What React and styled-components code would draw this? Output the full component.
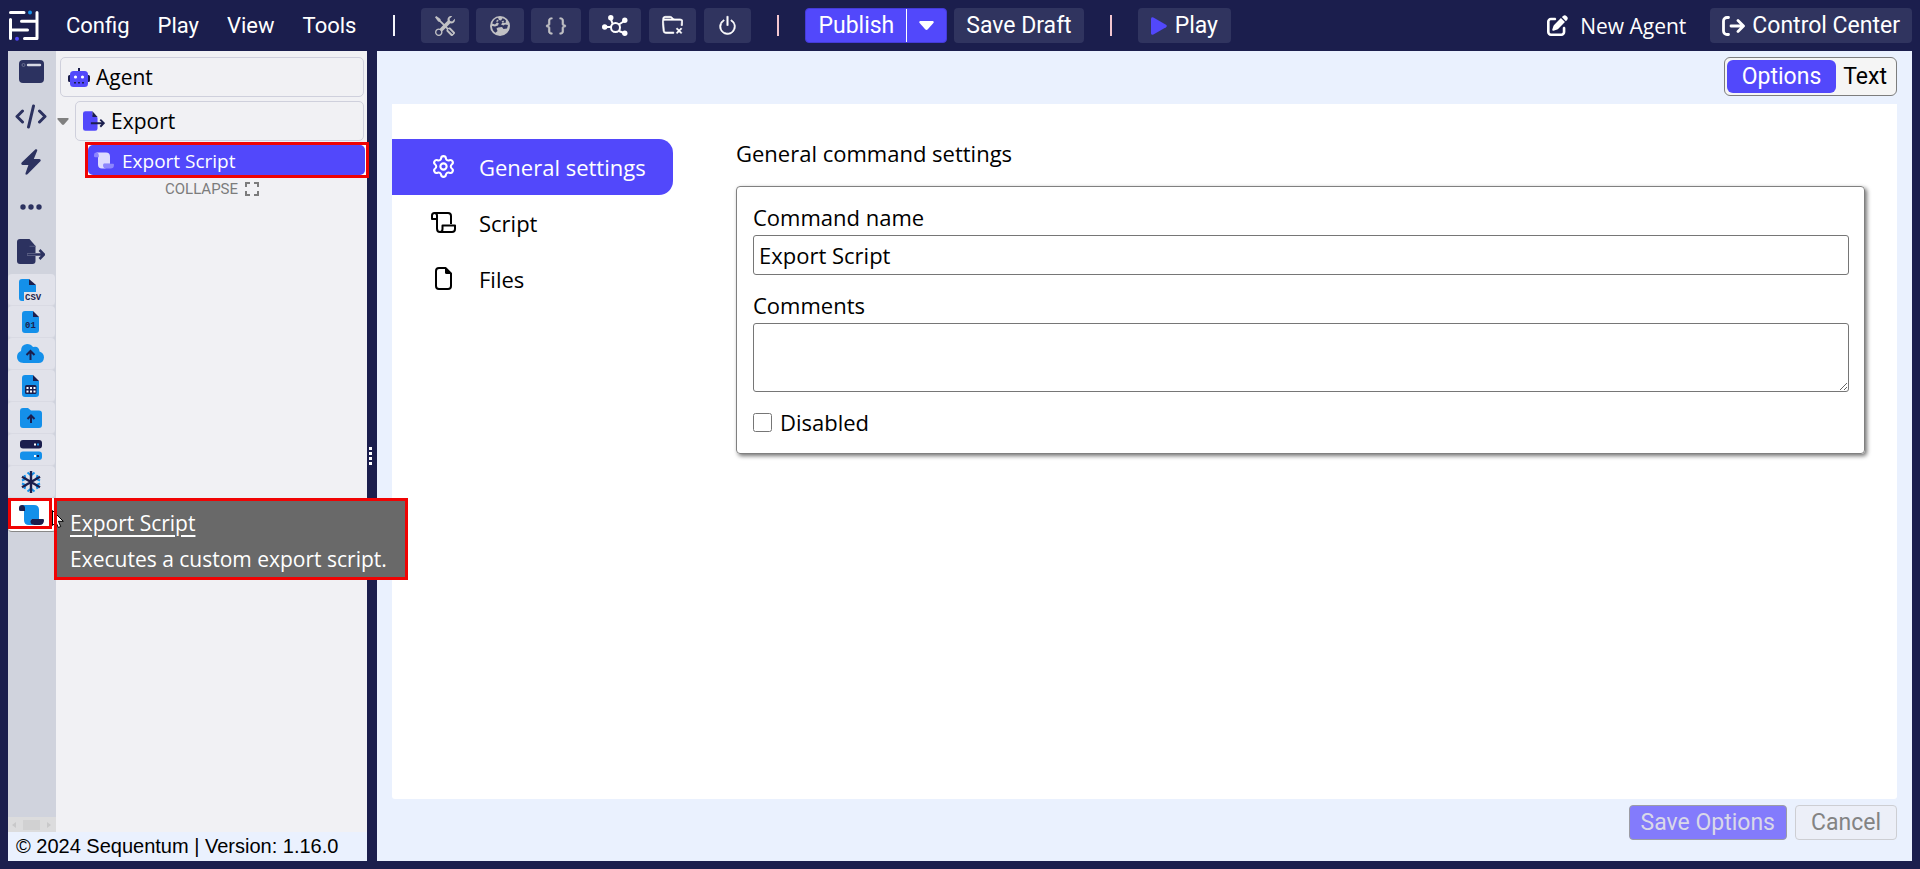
import React from 'react';
import styled, { createGlobalStyle, css } from 'styled-components';
import { BsTools, BsBraces, BsFolderX, BsPower } from 'react-icons/bs';
import { FaPenToSquare } from 'react-icons/fa6';
import { Settings } from 'lucide-react';

const color = {
  navy: '#1b1e4d',
  navyLight: '#30345f',
  accent: '#5248fb',
  pale: '#eaf1fe',
  rail: '#d0d3dd',
  railItem: '#e1e2ea',
  tree: '#f1f1f4',
  ink: '#2c3260',
  blue: '#1490ea',
  red: '#f00303',
};

const openSans = '"Open Sans", "Noto Sans", sans-serif';
const roboto = 'Roboto, sans-serif';

const GlobalStyle = createGlobalStyle`
  *, *::before, *::after { box-sizing: border-box; }
  body { margin: 0; background: ${color.navy}; }
  button, input, textarea { font: inherit; margin: 0; }
  svg { display: block; flex: none; }
`;

const Page = styled.div`
  min-height: 100vh;
  display: flex;
  flex-direction: column;
  padding: 0 8px 8px;
  background: ${color.navy};
  color: #000;
  font-family: ${openSans};
  font-size: 22px;
`;

/* Header */
const Header = styled.header`
  display: flex;
  align-items: center;
  height: 51px;
  color: #fff;
  font-family: ${roboto};
  font-size: 23px;
  white-space: nowrap;
`;

const Menu = styled.nav`
  display: flex;
  gap: 28px;
  margin: 0 11px 0 26px;
  font-size: 22px;
`;

const MenuButton = styled.button`
  padding: 0;
  border: 0;
  background: none;
  color: inherit;
`;

const Divider = styled.span`
  width: 2px;
  height: 21px;
  background: ${(p) => (p.$red ? '#f3c6cf' : '#f4f4fa')};
  margin: 0 26px;
`;

const Tools = styled.div`
  display: flex;
  gap: ${(p) => p.$gap}px;
  & + & { margin-left: 8px; }
`;

const BarButton = styled.button`
  display: flex;
  align-items: center;
  gap: 7px;
  height: 35px;
  padding: 0 12px;
  border: 0;
  border-radius: 4px;
  background: ${color.navyLight};
  color: #fff;
`;

const PlayButton = styled(BarButton)`
  gap: 8px;
  padding: 0 13px;
`;

const IconButton = styled(BarButton)`
  padding: 0 ${(p) => p.$pad || 14}px;
  color: ${(p) => (p.$dim ? '#c1c1c4' : '#fff')};
`;

const Bold = styled.span`
  display: flex;
  path { stroke: currentColor; stroke-width: 0.5px; }
`;

const Publish = styled.div`
  display: flex;
  height: 35px;
  margin-right: 7px;
  border: 1px solid #443bd8;
  border-radius: 4px;
  background: ${color.accent};
`;

const PublishPart = styled.button`
  display: flex;
  align-items: center;
  padding: 0 12px;
  border: 0;
  background: none;
  color: #fff;
  & + & { border-left: 1px solid #fff; }
`;

const HeaderEnd = styled.div`
  display: flex;
  align-items: center;
  margin-left: auto;
  gap: 24px;
`;

const NewAgent = styled.a`
  display: flex;
  align-items: center;
  gap: 12px;
  color: #fff;
  text-decoration: none;
  font-family: ${openSans};
  font-size: 21px;
`;

/* Body */
const Body = styled.div`
  flex: 1;
  display: flex;
`;

const LeftPane = styled.aside`
  width: 359px;
  flex: none;
  display: flex;
  flex-direction: column;
  background: ${color.tree};
`;

const LeftContent = styled.div`
  flex: 1;
  display: flex;
`;

const Rail = styled.div`
  width: 48px;
  flex: none;
  display: flex;
  flex-direction: column;
  background: ${color.rail};
`;

const RailGroups = styled.div`
  display: grid;
  grid-auto-rows: 45px;
  margin-top: -2px;
`;

const RailButton = styled.button`
  display: grid;
  place-items: center;
  padding: 0 2px 0 0;
  border: 0;
  background: none;
`;

const RailItems = styled.div`
  position: relative;
  display: flex;
  flex-direction: column;
`;

const RailItem = styled(RailButton)`
  height: 32px;
  border-radius: 4px;
  margin-right: 1px;
  border-bottom: 1px solid #d9dae3;
  background: ${color.railItem};
  ${(p) =>
    p.$active &&
    css`
      height: 34px;
      margin-right: 0;
      border-bottom: 1px solid #888;
      background: #fff;
    `}
`;

const RailFrame = styled.div`
  position: absolute;
  left: 0;
  right: 4px;
  bottom: 3px;
  height: 31px;
  border: 3px solid ${color.red};
  pointer-events: none;
`;

const Tooltip = styled.div`
  position: absolute;
  z-index: 3;
  left: 46px;
  top: 224px;
  width: max-content;
  padding: 4px 18px 0 13px;
  border: 3px solid ${color.red};
  background: #696969;
  color: #fff;
  font-size: 21px;
  line-height: 36px;
  p { margin: 0; }
  p:first-child { text-decoration: underline; text-underline-offset: 4px; }
`;

const Cursor = styled.svg`
  position: absolute;
  z-index: 4;
  left: 44px;
  bottom: 3px;
`;

const RailScroll = styled.div`
  display: flex;
  align-items: center;
  justify-content: space-between;
  height: 15px;
  margin-top: auto;
  padding: 0 5px 0 4px;
  background: #dcdcdd;
`;

const ScrollThumb = styled.span`
  width: 17px;
  height: 10px;
  background: #d1d1d2;
`;

const Tree = styled.div`
  flex: 1;
  display: flex;
  flex-direction: column;
  gap: 4px;
  padding: 6px 3px 6px 4px;
`;

const TreeRow = styled.div`
  display: flex;
  align-items: center;
  gap: 6px;
`;

const TreeCaret = styled.button`
  display: flex;
  margin: 0 0 0 -3px;
  padding: 0;
  border: 0;
  background: none;
`;

const TreeNode = styled.button`
  flex: 1;
  display: flex;
  align-items: center;
  gap: 6px;
  height: 40px;
  padding: 0 7px;
  border: 1px solid #cfd0dc;
  border-radius: 5px;
  background: ${color.tree};
  font-size: 21px;
  text-align: left;
`;

const SelectedFrame = styled.div`
  position: relative;
  z-index: 1;
  margin: -3px -5px 0 25px;
  padding-right: 1px;
  border: 3px solid ${color.red};
  background: #fff;
`;

const SelectedNode = styled(TreeNode)`
  width: 100%;
  height: 30px;
  gap: 8px;
  padding: 1px 6px 0;
  border: 0;
  background: ${color.accent};
  color: #fff;
  font-size: 19px;
`;

const Collapse = styled.button`
  display: flex;
  align-items: center;
  justify-content: center;
  gap: 7px;
  margin-top: -1px;
  padding: 0;
  border: 0;
  background: none;
  color: #7c7c7c;
  font-family: ${roboto};
  font-size: 15px;
  line-height: 16px;
`;

const Version = styled.footer`
  height: 29px;
  padding-left: 8px;
  background: ${color.pale};
  font-family: "Liberation Sans", Arial, sans-serif;
  font-size: 20px;
  line-height: 28px;
`;

const Splitter = styled.div`
  width: 10px;
  flex: none;
  display: flex;
  flex-direction: column;
  align-items: center;
  justify-content: center;
  gap: 2px;
  padding-right: 4px;
  span { width: 3px; height: 3px; background: #fff; }
`;

const Main = styled.main`
  flex: 1;
  min-width: 0;
  display: flex;
  flex-direction: column;
  padding: 6px 15px 21px;
  background: ${color.pale};
`;

const Toggle = styled.div`
  align-self: flex-end;
  display: flex;
  height: 39px;
  margin-bottom: 8px;
  padding: 2px;
  border: 1px solid #7d7d7d;
  border-radius: 6px;
  background: #f5f5f5;
  font-size: 23px;
`;

const ToggleButton = styled.button`
  padding: 0 ${(p) => (p.$on ? 15 : 7)}px;
  border: 0;
  border-radius: 6px;
  background: ${(p) => (p.$on ? color.accent : 'transparent')};
  color: ${(p) => (p.$on ? '#fff' : '#000')};
  font-family: ${roboto};
`;

const Sheet = styled.section`
  flex: 1;
  display: flex;
  padding: 35px 32px 35px 0;
  border-radius: 0 0 3px 3px;
  background: #fff;
`;

const Tabs = styled.nav`
  width: 281px;
  flex: none;
  margin-right: 63px;
`;

const Tab = styled.button`
  display: flex;
  align-items: center;
  width: 100%;
  height: 56px;
  padding: 0 0 1px 37px;
  border: 0;
  border-radius: 0 14px 14px 0;
  background: ${(p) => (p.$on ? color.accent : 'none')};
  color: ${(p) => (p.$on ? '#fff' : '#000')};
`;

const TabIcon = styled.span`
  display: flex;
  justify-content: center;
  width: 28px;
  margin-right: 22px;
`;

const Form = styled.form`
  flex: 1;
  min-width: 0;
`;

const Title = styled.h1`
  margin: 0 0 19px;
  font-size: 22px;
  font-weight: 400;
  line-height: 28px;
`;

const Card = styled.div`
  display: flex;
  flex-direction: column;
  padding: 16px 15px 16px 16px;
  border: 1px solid #808080;
  border-radius: 4px;
  box-shadow: 2px 2px 4px rgba(0, 0, 0, 0.55);
`;

const Label = styled.label`
  margin-bottom: 4px;
  line-height: 28px;
`;

const fieldBox = css`
  width: 100%;
  padding: 0 5px;
  border: 1px solid #767676;
  border-radius: 3px;
  background: #fff;
  outline: none;
`;

const TextInput = styled.input`
  ${fieldBox}
  height: 40px;
  margin-bottom: 16px;
`;

const TextArea = styled.textarea`
  ${fieldBox}
  height: 69px;
  margin-bottom: 15px;
  resize: vertical;
`;

const CheckRow = styled.label`
  display: flex;
  align-items: center;
  gap: 8px;
  line-height: 30px;
  input { width: 19px; height: 19px; }
`;

const Actions = styled.div`
  display: flex;
  justify-content: flex-end;
  gap: 8px;
  margin-top: 6px;
  font-size: 23px;
`;

const ActionButton = styled.button`
  height: 35px;
  padding: 0 ${(p) => (p.$primary ? 11 : 15)}px;
  border: 1px solid ${(p) => (p.$primary ? '#9c9da5' : '#cdced3')};
  border-radius: 4px;
  background: ${(p) => (p.$primary ? '#837bfc' : '#eceff8')};
  color: ${(p) => (p.$primary ? '#d9d8e8' : '#838383')};
  font-family: ${roboto};
`;

/* Drawings */
const Logo = () => (
  <svg width="32" height="32" viewBox="0 0 32 32" fill="none" stroke="#fff" strokeWidth="3" strokeLinecap="round" strokeLinejoin="round">
    <path d="M2.500 2.500H16M29 2.500V28.500H16.500M29 11.200H13.500M2.500 9.500V28.500M3 20H19.500" />
    <circle cx="22" cy="2.500" r="2" fill={color.blue} stroke="none" />
    <circle cx="9" cy="28.700" r="2" fill={color.accent} stroke="none" />
  </svg>
);

const Globe = () => (
  <svg width="20" height="20" viewBox="0 0 20 20">
    <circle cx="10" cy="10" r="10" fill="currentColor" />
    <path
      d="M8 1.800Q3.500 3 2.200 7.500L5 8.500 7 6.500 8.800 7.200 8 9.500 5 10.500 2 10Q2 14.500 5.500 16.800L7.500 15 6.500 12.500 8 11.500l4-.5 1.500 2 3.500-.5 1-3.500-3-.5-1.500 1L11 8.500l1.500-2 3 .5.5-2.500Q14.500 2.800 12.500 2.200L11 4.500 9 4z"
      fill={color.navyLight}
    />
    <path d="M6 5l2-1.500.5 1.500L7 6zM11.500 5.500l2-1 .5 1.500-1.500.5z" fill="currentColor" />
  </svg>
);

const Hub = () => (
  <svg width="26" height="22" viewBox="0 0 26 22" fill="none" stroke="#fff" strokeWidth="2">
    <circle cx="13.500" cy="12.500" r="4.500" />
    <path d="M3 12h6M10.500 8.500L8.500 3M17 9.500l6-4M17 16l6 2.500" />
    <g fill="#fff" stroke="none">
      <circle cx="2.700" cy="12" r="2.700" />
      <circle cx="8.800" cy="2.700" r="2.700" />
      <circle cx="22.800" cy="5.300" r="2.700" />
      <circle cx="22.800" cy="18.300" r="2.700" />
    </g>
  </svg>
);

const Exit = () => (
  <svg width="23" height="20" viewBox="0 0 23 20" fill="none" stroke="#fff" strokeWidth="2.800" strokeLinecap="round" strokeLinejoin="round">
    <path d="M6.500 1.500H5a3.500 3.500 0 0 0-3.500 3.500v10A3.500 3.500 0 0 0 5 18.500h1.500M9 10h12M16 4.500l5.500 5.500-5.500 5.500" />
  </svg>
);

const Caret = ({ w = 15, h = 9, fill = '#fff' }) => (
  <svg width={w} height={h} viewBox="0 0 15 9">
    <path d="M1.200 0h12.600q1.600.6.600 2L8.800 8.300q-1.300 1.200-2.600 0L.6 2Q-.4.600 1.200 0z" fill={fill} />
  </svg>
);

const PlayMark = () => (
  <svg width="16" height="18" viewBox="0 0 16 18">
    <path d="M0 1.500Q.4-.4 2.400.4L15 7.700q1.500 1.200 0 2.500L2.400 17.600Q.4 18.400 0 16.500z" fill={color.accent} />
  </svg>
);

const Robot = () => (
  <svg width="22" height="19" viewBox="0 0 22 19">
    <path d="M10 0h2v4h-2zM0 8.500Q0 7 1.500 7H3v7H1.500Q0 14 0 12.500zM19 7h1.500Q22 7 22 8.500v4q0 1.500-1.500 1.500H19z" fill={color.navy} />
    <rect x="2" y="3" width="18" height="16" rx="3.500" fill={color.accent} />
    <circle cx="7.500" cy="9" r="1.600" fill="#fff" />
    <circle cx="14.500" cy="9" r="1.600" fill="#fff" />
    <path d="M6 14h2v1.500H6zM10 14h2v1.500h-2zM14 14h2v1.500h-2z" fill={color.navy} />
  </svg>
);

const ExportMark = () => (
  <svg width="22" height="20" viewBox="0 0 28 25">
    <path d="M3 0h9v4.500L18.500 8V22q0 3-3 3H3q-3 0-3-3V3q0-3 3-3z" fill={color.accent} />
    <path d="M12 0l6.500 7.500H12z" fill={color.navy} />
    <path d="M10 15.300h16.500M22 10.800l4.500 4.500-4.500 4.500" fill="none" stroke={color.navy} strokeWidth="2.400" />
  </svg>
);

const RailExportMark = () => (
  <svg width="28" height="25" viewBox="0 0 28 25">
    <path d="M3 0h9.500L18.500 7V22q0 3-3 3H3q-3 0-3-3V3q0-3 3-3z" fill={color.ink} />
    <path d="M10 15.500h8.500" stroke="#6a6f90" strokeWidth="2.400" />
    <path d="M12.500 7.300h6" stroke="#565b82" />
    <path d="M18.500 15.500H27M22.500 11l4.500 4.500-4.500 4.500" fill="none" stroke={color.ink} strokeWidth="2.600" />
    <path d="M10.500 15.500h9" stroke={color.ink} />
  </svg>
);

const Scroll = ({ w, h, paper, roll }) => (
  <svg width={w} height={h} viewBox="0 0 25 20">
    <path d="M3 0h12q5 0 5 5v9h-8v3q0 2 3 3h-5q-5 0-5-5V5z" fill={paper} />
    <path d="M3 0q3 .4 3 3v3H1.500Q0 6 0 4.500V3Q0 0 3 0zM12.500 14H24q1 0 1 1.200Q25 20 20.500 20H15q-3.500-.5-3.500-3.500z" fill={roll} />
  </svg>
);

const ExpandMark = () => (
  <svg width="14" height="14" viewBox="0 0 14 14" fill="none" stroke="#7c7c7c" strokeWidth="2">
    <path d="M1 5V1h4M9 1h4v4M13 9v4H9M5 13H1V9" />
  </svg>
);

const WindowMark = () => (
  <svg width="25" height="23" viewBox="0 0 25 23">
    <rect width="25" height="23" rx="4" fill={color.ink} />
    <circle cx="4.500" cy="5" r="1.500" fill="none" stroke="#6a6f90" />
    <path d="M9 5h12" stroke="#d7d9e4" strokeWidth="2.400" strokeLinecap="round" />
  </svg>
);

const CodeMark = () => (
  <svg width="32" height="25" viewBox="0 0 32 25" fill="none" stroke={color.ink} strokeWidth="3" strokeLinecap="round" strokeLinejoin="round">
    <path d="M7.500 7L2 12.500 7.500 18M24.500 7l5.500 5.500-5.500 5.500M18.500 2l-5 21" />
  </svg>
);

const BoltMark = () => (
  <svg width="20" height="26" viewBox="0 0 20 26">
    <path d="M14.500.2q2.300-.4 1.600 1.800L12.800 10h5.600q2.300.6.700 2.600L6.500 25.300q-2.300 1.300-2-1L7.400 16H1.500q-2-.6-.8-2.500z" fill={color.ink} />
  </svg>
);

const DotsMark = () => (
  <svg width="22" height="6" viewBox="0 0 22 6" fill={color.ink}>
    <circle cx="3" cy="3" r="2.700" />
    <circle cx="11" cy="3" r="2.700" />
    <circle cx="19" cy="3" r="2.700" />
  </svg>
);

const IconText = styled.text`
  font-family: "Liberation Mono", monospace;
  font-weight: 700;
  font-size: 9px;
  fill: ${color.navy};
`;

const Sheetlet = ({ children }) => (
  <svg width="17" height="22" viewBox="0 0 17 22">
    <path d="M3 0h8v6h6v13q0 3-3 3H3q-3 0-3-3V3q0-3 3-3z" fill={color.blue} />
    <path d="M11 0l6 6h-6z" fill={color.navy} />
    {children}
  </svg>
);

const CsvMark = () => (
  <svg width="24" height="24" viewBox="0 0 24 24">
    <path d="M3 1h7v6h7v7H5v9H3q-3 0-3-3V4q0-3 3-3z" fill={color.blue} />
    <path d="M10 1l7 6h-7z" fill={color.navy} />
    <IconText x="6" y="22">CSV</IconText>
  </svg>
);

const CloudMark = () => (
  <svg width="27" height="19" viewBox="0 0 27 19">
    <path d="M6.500 19Q0 18.500 0 13q0-4.500 4-6Q4 .5 10 0q4 0 6 3 6-1.500 6.500 4.500Q27 9 27 13.500 26.500 19 21.500 19z" fill={color.blue} />
    <path d="M13.500 16V7.500M9.500 11l4-4 4 4" fill="none" stroke={color.navy} strokeWidth="2" />
  </svg>
);

const FolderMark = () => (
  <svg width="22" height="20" viewBox="0 0 22 20">
    <path d="M3 0h5l3 2.500h8q3 0 3 3V17q0 3-3 3H3q-3 0-3-3V3q0-3 3-3z" fill={color.blue} />
    <path d="M11 15V8M7.500 11L11 7.500l3.500 3.500" fill="none" stroke={color.navy} strokeWidth="2" />
  </svg>
);

const ServerMark = () => (
  <svg width="22" height="20" viewBox="0 0 22 20">
    <rect width="22" height="8.500" rx="3" fill={color.navy} />
    <rect y="11.500" width="22" height="8.500" rx="3" fill={color.blue} />
    <path d="M14 3.500h2v2h-2zM14 15h2v2h-2z" fill="#fff" />
    <path d="M17 3.500h2v2h-2z" fill={color.blue} />
    <path d="M17 15h2v2h-2z" fill={color.navy} />
  </svg>
);

const SnowMark = () => (
  <svg width="20" height="22" viewBox="0 0 20 22" fill="none" strokeWidth="2">
    <path d="M6.500 1.500L10 4.500l3.500-3M6.500 20.500L10 17.500l3.500 3M1 9.500L4.500 8 3.500 4M19 9.500L15.500 8l1-4M1 12.500L4.500 14l-1 4M19 12.500L15.500 14l1 4" stroke={color.blue} />
    <path d="M10 0v22M1 5.800l18 10.400M19 5.800L1 16.200" stroke={color.navy} strokeWidth="2.400" />
  </svg>
);

const ScrollOutline = () => (
  <svg width="25" height="21" viewBox="0 0 25 21" fill="none" stroke="currentColor" strokeWidth="2" strokeLinejoin="round">
    <path d="M3.500 1H17q3 0 3 3v8M3.500 1Q1 1 1 3.500V7h5M3.500 1Q6 1 6 3.500V16.500Q6 20 9 20h12q3 0 3-3v-3.500H11.500V17q0 3-2.500 3" />
  </svg>
);

const FileOutline = () => (
  <svg width="17" height="23" viewBox="0 0 17 23">
    <path d="M10.500 1H4Q1 1 1 4v15q0 3 3 3h9q3 0 3-3V6.500z" fill="none" stroke="currentColor" strokeWidth="2" strokeLinejoin="round" />
    <path d="M10 1v4.500Q10 7 11.500 7H16z" fill="currentColor" />
  </svg>
);

const railGroups = [
  ['Page', <WindowMark />],
  ['Code', <CodeMark />],
  ['Actions', <BoltMark />],
  ['Other', <DotsMark />],
  ['Export', <RailExportMark />],
];

const railItems = [
  ['CSV', <CsvMark />],
  ['Binary', <Sheetlet><IconText x="3" y="17">01</IconText></Sheetlet>],
  ['Cloud', <CloudMark />],
  ['Spreadsheet', (
    <Sheetlet>
      <rect x="3" y="10" width="11.500" height="9" rx="1.500" fill={color.navy} />
      <path d="M4.500 12h2v2h-2zM8 12h2v2H8zM11.500 12h2v2h-2zM4.500 15.500h2v2h-2zM8 15.500h2v2H8zM11.500 15.500h2v2h-2z" fill="#fff" />
    </Sheetlet>
  )],
  ['Folder', <FolderMark />],
  ['Server', <ServerMark />],
  ['Snowflake', <SnowMark />],
  ['Export Script', <Scroll w={25} h={20} paper={color.blue} roll={color.navy} />],
];

export default function App() {
  return (
    <>
      <GlobalStyle />
      <Page>
        <Header>
          <Logo />
          <Menu>
            {['Config', 'Play', 'View', 'Tools'].map((item) => (
              <MenuButton key={item}>{item}</MenuButton>
            ))}
          </Menu>
          <Divider />
          <Tools $gap={7}>
            <IconButton $dim aria-label="Tools"><BsTools size={20} /></IconButton>
            <IconButton $dim aria-label="Browser"><Globe /></IconButton>
            <IconButton $dim aria-label="Variables"><Bold><BsBraces size={22} /></Bold></IconButton>
          </Tools>
          <Tools $gap={8}>
            <IconButton $pad={13} aria-label="Network"><Hub /></IconButton>
            <IconButton $pad={13} aria-label="Clear folder"><Bold><BsFolderX size={21} /></Bold></IconButton>
            <IconButton $pad={13} aria-label="Power"><Bold><BsPower size={21} /></Bold></IconButton>
          </Tools>
          <Divider $red />
          <Publish>
            <PublishPart>Publish</PublishPart>
            <PublishPart aria-label="Publish options"><Caret /></PublishPart>
          </Publish>
          <BarButton>Save Draft</BarButton>
          <Divider $red />
          <PlayButton><PlayMark />Play</PlayButton>
          <HeaderEnd>
            <NewAgent href="#new"><FaPenToSquare size={21} />New Agent</NewAgent>
            <BarButton><Exit />Control Center</BarButton>
          </HeaderEnd>
        </Header>

        <Body>
          <LeftPane>
            <LeftContent>
              <Rail>
                <RailGroups>
                  {railGroups.map(([name, icon]) => (
                    <RailButton key={name} aria-label={name}>{icon}</RailButton>
                  ))}
                </RailGroups>
                <RailItems>
                  {railItems.map(([name, icon]) => (
                    <RailItem key={name} aria-label={name} $active={name === 'Export Script'}>{icon}</RailItem>
                  ))}
                  <RailFrame />
                  <Tooltip role="tooltip">
                    <p>Export Script</p>
                    <p>Executes a custom export script.</p>
                  </Tooltip>
                  <Cursor width="12" height="19" viewBox="0 0 12 19">
                    <path d="M.5.500v15l3.500-3.300 2.300 5.300 2.400-1-2.300-5.200h4.900z" fill="#fff" stroke="#000" />
                    <path d="M2 0h3v19H2z" fill={color.red} />
                  </Cursor>
                </RailItems>
                <RailScroll>
                  <svg width="4" height="6" viewBox="0 0 4 6"><path d="M4 0v6L0 3z" fill="#c9c9ca" /></svg>
                  <ScrollThumb />
                  <svg width="4" height="6" viewBox="0 0 4 6"><path d="M0 0v6l4-3z" fill="#c9c9ca" /></svg>
                </RailScroll>
              </Rail>
              <Tree>
                <TreeRow>
                  <TreeNode><Robot />Agent</TreeNode>
                </TreeRow>
                <TreeRow>
                  <TreeCaret aria-label="Collapse Export"><Caret w={12} h={7} fill="#808080" /></TreeCaret>
                  <TreeNode><ExportMark />Export</TreeNode>
                </TreeRow>
                <SelectedFrame>
                  <SelectedNode>
                    <Scroll w={20} h={17} paper="#dddbfe" roll="#8d86fd" />
                    Export Script
                  </SelectedNode>
                </SelectedFrame>
                <Collapse>COLLAPSE <ExpandMark /></Collapse>
              </Tree>
            </LeftContent>
            <Version>© 2024 Sequentum | Version: 1.16.0</Version>
          </LeftPane>

          <Splitter><span /><span /><span /><span /></Splitter>

          <Main>
            <Toggle>
              <ToggleButton $on>Options</ToggleButton>
              <ToggleButton>Text</ToggleButton>
            </Toggle>
            <Sheet>
              <Tabs>
                <Tab $on><TabIcon><Settings size={25} /></TabIcon>General settings</Tab>
                <Tab><TabIcon><ScrollOutline /></TabIcon>Script</Tab>
                <Tab><TabIcon><FileOutline /></TabIcon>Files</Tab>
              </Tabs>
              <Form>
                <Title>General command settings</Title>
                <Card>
                  <Label htmlFor="name">Command name</Label>
                  <TextInput id="name" defaultValue="Export Script" />
                  <Label htmlFor="comments">Comments</Label>
                  <TextArea id="comments" />
                  <CheckRow><input type="checkbox" />Disabled</CheckRow>
                </Card>
              </Form>
            </Sheet>
            <Actions>
              <ActionButton $primary disabled>Save Options</ActionButton>
              <ActionButton disabled>Cancel</ActionButton>
            </Actions>
          </Main>
        </Body>
      </Page>
    </>
  );
}
